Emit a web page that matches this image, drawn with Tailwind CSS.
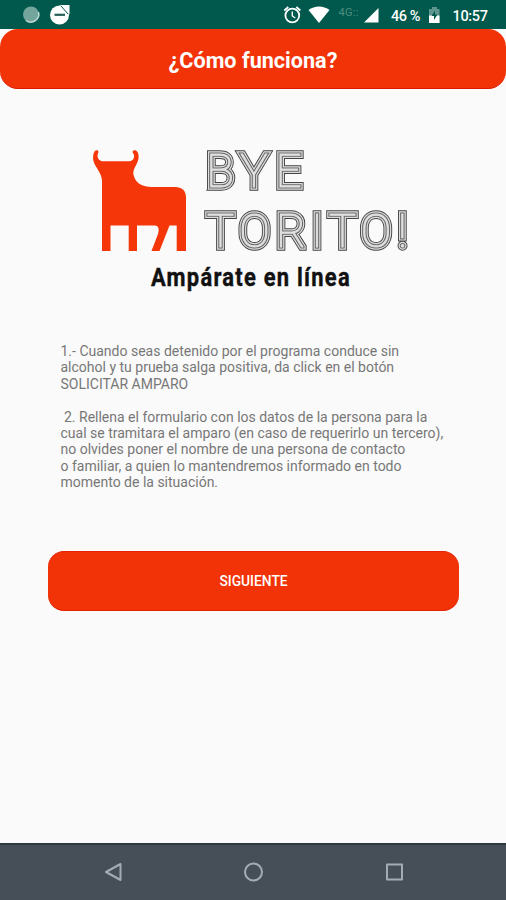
<!DOCTYPE html>
<html lang="es">
  <head>
    <meta charset="UTF-8" />
    <meta name="viewport" content="width=device-width, initial-scale=1.0" />
    <title>¿Cómo funciona?</title>
    <script src="https://cdn.jsdelivr.net/npm/@tailwindcss/browser@4"></script>
  </head>
  <body class="bg-[#fafafa]">
    <div class="w-[506px] h-[900px] flex flex-col overflow-hidden font-['Roboto',sans-serif]">
      <!-- Status bar -->
      <div class="h-[29px] shrink-0 bg-[#00594c] text-white">
        <svg class="block" width="506" height="29" viewBox="0 0 506 29">
          <circle cx="31" cy="14.5" r="8" fill="#74a59d" />
          <path d="M26 20.5A8 8 0 0 0 38.5 12" fill="none" stroke="#c2d9d5" stroke-width="1.5" />
          <circle cx="59.500" cy="15" r="9.500" fill="#fff" />
          <path d="M60 5h9.500v9.500z" fill="#fff" />
          <path d="M61 6l7 8" stroke="#00594c" stroke-width="1" />
          <path d="M54.500 14.800h10.500" stroke="#245e54" stroke-width="2.200" />

          <!-- Alarm -->
          <g fill="none" stroke="#fff" stroke-width="1.800">
            <circle cx="292.300" cy="15.500" r="6.900" />
            <path d="M284.300 10.500l4-3.500M300.300 10.500l-4-3.500" />
            <path d="M292.300 11.500v4.500l3 2" stroke-width="1.400" />
          </g>
          <!-- Wifi -->
          <path d="M308.500 10C314.500 5.300 323.500 5.300 329.500 10L319 23z" fill="#fff" />
          <text x="338.500" y="15.500" font-size="11" fill="#4f8c82" textLength="20">4G::</text>
          <path d="M378.500 8v14.500h-14.500z" fill="#fff" />
          <text x="391" y="20.500" font-size="14.500" font-weight="500" fill="#fff" textLength="29.500">46 %</text>
          <!-- Battery -->
          <path d="M432 7h5v2h2.500v14h-10.500v-14h3z" fill="#5f968d" />
          <path d="M429 15.500h10.500v7.500h-10.500z" fill="#fff" />
          <path d="M435 10.500l-3.500 5.500h2.500v4l3.500-5.500h-2.500z" fill="#00594c" />
          <text x="452.500" y="20.500" font-size="14.500" font-weight="500" fill="#fff" textLength="35.500">10:57</text>
        </svg>
      </div>

      <header class="h-[60px] shrink-0 rounded-[18px] bg-[#f23307] border-b border-[#dc1900] flex items-center justify-center">
        <h1 class="text-[21.600px] leading-none font-bold text-white pt-1">¿Cómo funciona?</h1>
      </header>

      <main class="flex-1 flex flex-col items-start">
        <!-- Logo -->
        <svg class="block mt-[46px] ml-[80px] shrink-0" width="340" height="165" viewBox="80 135 340 165">
          <defs>
            <g id="wordmark" font-weight="100" font-size="46" text-anchor="middle" stroke-linejoin="miter" stroke-miterlimit="3">
              <text x="220 254 288.500" y="187">BYE</text>
              <text x="220.500 254.500 291 317 342.500 376 402.500" y="247">TORITO!</text>
            </g>
          </defs>
          <path
            d="M94.500 151.500C96 149.500 98.500 150 98.500 152L97.500 155C97.500 159 99.500 161.300 104 161.300H128C132.500 161.300 134.500 159 134 155L132.500 152C133 149.500 136 149.500 137.500 152C139 155 139 158.500 137.500 162C136 166 133.300 169 133.300 173.500C134.500 182 141 187 152 187H175C182 187 186 190.500 186 197.500V251H176.700V225.500H169.500L159.500 251H151.500L158 234C159.500 229 158.500 225.500 155 225.500H137V251H128.700V225.500H110.500V251H102V181C102 173 94.800 167 93.500 161C92.700 157.500 93 154 94.500 151.500Z"
            fill="#f53608"
          />
          <g class="grayscale">
            <use href="#wordmark" fill="#444" stroke="#444" stroke-width="7.500" />
            <use href="#wordmark" fill="#ddd" stroke="#ddd" stroke-width="5.600" />
            <use href="#wordmark" fill="#666" stroke="#666" stroke-width="3.200" />
            <use href="#wordmark" fill="#e0e0e0" stroke="#e0e0e0" stroke-width="1" />
          </g>
          <g transform="translate(151 286) scale(0.860 1)">
            <text font-size="25.500" font-weight="700" fill="#111" stroke="#111" stroke-width="0.400" textLength="231">Ampárate en línea</text>
          </g>
        </svg>

        <!-- Steps -->
        <div class="mt-[43px] ml-[60.5px] text-[14px] leading-[16.4px] text-[#777]">
          <p class="whitespace-pre">1.- Cuando seas detenido por el programa conduce sin
alcohol y tu prueba salga positiva, da click en el botón
SOLICITAR AMPARO</p>
          <p class="mt-[16.4px] whitespace-pre"> 2. Rellena el formulario con los datos de la persona para la
cual se tramitara el amparo (en caso de requerirlo un tercero),
no olvides poner el nombre de una persona de contacto
o familiar, a quien lo mantendremos informado en todo
momento de la situación.</p>
        </div>

        <button class="mt-[60.4px] ml-12 w-[411px] h-[60px] rounded-[16px] bg-[#f23307] border-y border-[#e52204] text-[13.800px] font-medium text-white">
          SIGUIENTE
        </button>
      </main>

      <!-- Navigation bar -->
      <nav class="h-[57px] shrink-0 bg-[#464f58] border-t-2 border-[#30393f]">
        <svg class="block" width="506" height="55" viewBox="0 845 506 55" fill="none" stroke="#a5abb3" stroke-width="2" stroke-linejoin="round">
          <path d="M120.500 864v16l-14.500-8z" />
          <circle cx="253.500" cy="872" r="8.500" />
          <rect x="387" y="864.500" width="15" height="15" />
        </svg>
      </nav>
    </div>
  </body>
</html>
